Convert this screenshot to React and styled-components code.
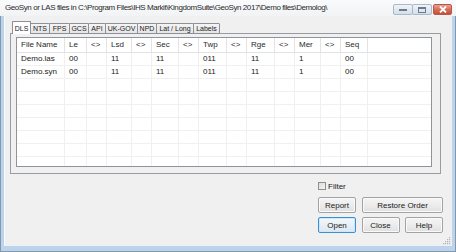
import React from 'react'
import styled, { createGlobalStyle } from 'styled-components'

const GlobalStyle = createGlobalStyle`
  html, body {
    margin: 0;
    padding: 0;
    background: #f0f0f0;
  }
  body {
    font-family: "Liberation Sans", Arial, sans-serif;
  }
`;

const Window = styled.div`
  width: 456px;
  height: 252px;
  box-sizing: border-box;
  display: flex;
  flex-direction: column;
  background: #bcd3ec;
  border: 1px solid #8597ad;
  border-top: none;
`;

const TitleBar = styled.div`
  height: 16px;
  flex: none;
  display: flex;
  align-items: flex-start;
  padding: 0 4px 0 5px;
  margin: 0 -1px;
  background: linear-gradient(#fafbfc, #f1f3f5);
`;

const Title = styled.div`
  font-size: 8px;
  line-height: 16px;
  color: #2a2a2a;
  letter-spacing: -0.42px;
  white-space: nowrap;
`;

const Controls = styled.div`
  margin-left: auto;
  margin-top: 4px;
  display: flex;
`;

const CtrlButton = styled.div`
  width: ${p => p.$w}px;
  height: 11px;
  box-sizing: border-box;
  display: flex;
  align-items: center;
  justify-content: center;
  border: 1px solid ${p => (p.$close ? '#b9564a' : '#a9b8ca')};
  border-radius: 2px;
  margin-left: ${p => (p.$close ? 1 : -1)}px;
  background: ${p =>
    p.$close
      ? 'linear-gradient(#e8a493, #d56d57 50%, #c94d37)'
      : 'linear-gradient(#f1f4f8, #e3e9f0 50%, #d7dfe8)'};
`;

const Client = styled.div`
  flex: 1;
  position: relative;
  display: flex;
  flex-direction: column;
  margin: 0 3px 5px 3px;
  background: #f0f0f0;
  border-left: 1px solid #f7fafd;
`;

const TabStrip = styled.div`
  display: flex;
  align-items: flex-end;
  height: 13px;
  margin: 5px 0 -1px 7px;
  position: relative;
  z-index: 1;
`;

const Tab = styled.div`
  width: ${p => p.$w}px;
  height: ${p => (p.$active ? 13 : 11)}px;
  box-sizing: border-box;
  margin-right: -1px;
  display: flex;
  align-items: center;
  justify-content: center;
  font-size: 7px;
  color: #222;
  border: 1px solid #8d9099;
  border-bottom: ${p => (p.$active ? 'none' : '1px solid #8d9099')};
  border-radius: 1px 1px 0 0;
  background: ${p => (p.$active ? '#ffffff' : 'linear-gradient(#f4f4f4, #e6e6e6)')};
  position: relative;
  z-index: ${p => (p.$active ? 2 : 0)};
`;

const Panel = styled.div`
  width: 431px;
  height: 141px;
  margin-left: 5px;
  box-sizing: border-box;
  border: 1px solid #9a9ca2;
  background: #f0f0f0;
  padding: 3px 0 0 5px;
`;

const List = styled.div`
  width: 416px;
  height: 130px;
  box-sizing: border-box;
  border: 1px solid #8f939a;
  background: #fff;
  overflow: hidden;
`;

const Row = styled.div`
  display: flex;
  height: ${p => (p.$header ? 15 : 13)}px;
  box-sizing: border-box;
  border-bottom: 1px solid ${p => (p.$header ? '#e2e3e5' : '#f0f0f0')};
`;

const Cell = styled.div`
  width: ${p => p.$w}px;
  flex: none;
  box-sizing: border-box;
  padding-left: 4px;
  font-size: 8px;
  line-height: ${p => (p.$header ? 14 : 12)}px;
  color: ${p => (p.$header ? '#2a2a2a' : '#222')};
  border-right: 1px solid ${p => (p.$header ? '#e2e3e5' : '#f0f0f0')};
  white-space: nowrap;
`;

const Footer = styled.div`
  align-self: flex-end;
  width: 125px;
  margin-right: 9px;
  display: flex;
  flex-direction: column;
`;

const FilterRow = styled.label`
  display: flex;
  align-items: center;
  gap: 2px;
  margin-top: 8px;
  height: 8px;
  font-size: 8px;
  color: #222;
`;

const CheckBox = styled.span`
  width: 8px;
  height: 8px;
  box-sizing: border-box;
  border: 1px solid #8e8f8f;
  background: linear-gradient(135deg, #dcdcdc, #f6f6f6);
`;

const ButtonRow = styled.div`
  display: flex;
  justify-content: space-between;
  margin-top: ${p => p.$gap}px;
`;

const Button = styled.button`
  width: ${p => p.$w}px;
  height: 16px;
  padding: 0;
  box-sizing: border-box;
  font-family: "Liberation Sans", Arial, sans-serif;
  font-size: 8px;
  color: #222;
  border: 1px solid ${p => (p.$default ? '#3c8fd0' : '#a3a3a3')};
  border-radius: 2px;
  background: ${p =>
    p.$default
      ? 'linear-gradient(#f3f8fc, #e8eff6 50%, #dde7f1)'
      : 'linear-gradient(#f5f5f5, #ececec 50%, #e0e0e0)'};
  box-shadow: inset 0 0 0 1px ${p => (p.$default ? '#cfe7f8' : '#fafafa')};
`;

const Grip = styled.svg`
  position: absolute;
  right: 1px;
  bottom: 1px;
`;

const tabs = [
  ['DLS', 19],
  ['NTS', 20],
  ['FPS', 21],
  ['GCS', 20],
  ['API', 18],
  ['UK-GOV', 33],
  ['NPD', 20],
  ['Lat / Long', 38],
  ['Labels', 27],
];

const columns = [
  ['File Name', 48],
  ['Le', 22],
  ['<>', 20],
  ['Lsd', 25],
  ['<>', 20],
  ['Sec', 27],
  ['<>', 20],
  ['Twp', 28],
  ['<>', 20],
  ['Rge', 28],
  ['<>', 20],
  ['Mer', 26],
  ['<>', 20],
  ['Seq', 27],
];

const rows = [
  ['Demo.las', '00', '', '11', '', '11', '', '011', '', '11', '', '1', '', '00'],
  ['Demo.syn', '00', '', '11', '', '11', '', '011', '', '11', '', '1', '', '00'],
];

const emptyRows = 8;

const App = () => (
  <>
    <GlobalStyle />
    <Window>
      <TitleBar>
        <Title>
          GeoSyn or LAS files in C:\Program Files\IHS Markit\KingdomSuite\GeoSyn 2017\Demo files\Demolog\
        </Title>
        <Controls>
          <CtrlButton $w={20}>
            <svg width="8" height="5" viewBox="0 0 8 5">
              <rect x="0" y="2" width="8" height="2" fill="#6a7a90" />
            </svg>
          </CtrlButton>
          <CtrlButton $w={20}>
            <svg width="8" height="6" viewBox="0 0 8 6">
              <rect x="0.5" y="0.5" width="7" height="5" fill="none" stroke="#6a7a90" />
              <rect x="0.5" y="0.5" width="7" height="1.5" fill="#6a7a90" />
            </svg>
          </CtrlButton>
          <CtrlButton $w={19} $close>
            <svg width="8" height="7" viewBox="0 0 8 7">
              <path d="M1 0.5 L7 6.5 M7 0.5 L1 6.5" stroke="#fff" strokeWidth="1.8" />
            </svg>
          </CtrlButton>
        </Controls>
      </TitleBar>

      <Client>
        <TabStrip>
          {tabs.map(([label, w], i) => (
            <Tab key={label} $w={w} $active={i === 0}>
              {label}
            </Tab>
          ))}
        </TabStrip>
        <Panel>
          <List>
            <Row $header>
              {columns.map(([label, w], i) => (
                <Cell key={i} $w={w} $header>
                  {label}
                </Cell>
              ))}
            </Row>
            {rows.map((r, ri) => (
              <Row key={ri}>
                {r.map((v, ci) => (
                  <Cell key={ci} $w={columns[ci][1]}>
                    {v}
                  </Cell>
                ))}
              </Row>
            ))}
            {Array.from({ length: emptyRows }).map((_, ri) => (
              <Row key={'e' + ri}>
                {columns.map(([, w], ci) => (
                  <Cell key={ci} $w={w} />
                ))}
              </Row>
            ))}
          </List>
        </Panel>

        <Footer>
          <FilterRow>
            <CheckBox />
            Filter
          </FilterRow>
          <ButtonRow $gap={7}>
            <Button $w={38}>Report</Button>
            <Button $w={81}>Restore Order</Button>
          </ButtonRow>
          <ButtonRow $gap={4}>
            <Button $w={38} $default>Open</Button>
            <Button $w={38}>Close</Button>
            <Button $w={38}>Help</Button>
          </ButtonRow>
        </Footer>

        <Grip width="8" height="8" viewBox="0 0 8 8">
          <g fill="#a8b4c2">
            <rect x="6" y="0" width="1.2" height="1.2" />
            <rect x="4" y="2" width="1.2" height="1.2" />
            <rect x="6" y="2" width="1.2" height="1.2" />
            <rect x="2" y="4" width="1.2" height="1.2" />
            <rect x="4" y="4" width="1.2" height="1.2" />
            <rect x="6" y="4" width="1.2" height="1.2" />
            <rect x="0" y="6" width="1.2" height="1.2" />
            <rect x="2" y="6" width="1.2" height="1.2" />
            <rect x="4" y="6" width="1.2" height="1.2" />
            <rect x="6" y="6" width="1.2" height="1.2" />
          </g>
        </Grip>
      </Client>
    </Window>
  </>
);

export default App;
